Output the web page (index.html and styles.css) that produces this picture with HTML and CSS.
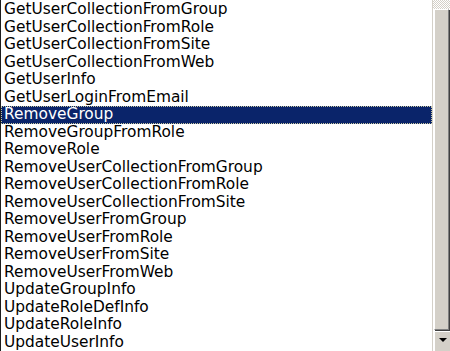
FILE: index.html
```html
<!DOCTYPE html>
<html lang="en">
<head>
    <meta charset="UTF-8">
    <title>Methods</title>
    <link rel="stylesheet" href="styles.css">
</head>
<body>
    <div class="listbox">
        <ul class="items">
            <li>GetUserCollectionFromGroup</li>
            <li>GetUserCollectionFromRole</li>
            <li>GetUserCollectionFromSite</li>
            <li>GetUserCollectionFromWeb</li>
            <li>GetUserInfo</li>
            <li>GetUserLoginFromEmail</li>
            <li class="selected">RemoveGroup</li>
            <li>RemoveGroupFromRole</li>
            <li>RemoveRole</li>
            <li>RemoveUserCollectionFromGroup</li>
            <li>RemoveUserCollectionFromRole</li>
            <li>RemoveUserCollectionFromSite</li>
            <li>RemoveUserFromGroup</li>
            <li>RemoveUserFromRole</li>
            <li>RemoveUserFromSite</li>
            <li>RemoveUserFromWeb</li>
            <li>UpdateGroupInfo</li>
            <li>UpdateRoleDefInfo</li>
            <li>UpdateRoleInfo</li>
            <li>UpdateUserInfo</li>
        </ul>
        <div class="scrollbar">
            <div class="track"></div>
            <div class="thumb"></div>
            <div class="btn-down"><span class="arrow"></span></div>
        </div>
    </div>
</body>
</html>
```

FILE: styles.css
```css
body {
    margin: 0;
    background-color: #fff;
}

.listbox {
    display: flex;
    width: 450px;
    height: 351px;
    overflow: hidden;
    border-left: 1px solid #1c1c1c;
    box-sizing: border-box;
    background-color: #fff;
}

.items {
    flex: 1;
    list-style: none;
    margin: 0;
    padding: 1px 0 0 0;
    font-family: "DejaVu Sans", Verdana, sans-serif;
    font-size: 15.4px;
    color: #000;
}

.items li {
    height: 17.5px;
    line-height: 17.5px;
    padding-left: 3px;
    white-space: nowrap;
    box-sizing: border-box;
}

.items li.selected {
    background-color: #0a246a;
    color: #fff;
    outline: 1px dotted #c8c8a0;
    outline-offset: -1px;
}

.scrollbar {
    width: 17px;
    display: flex;
    flex-direction: column;
    border-left: 1px solid #d4d0c8;
    background-color: #fff;
}

.track {
    height: 9px;
    background-image: repeating-conic-gradient(#d4d0c8 0 25%, #fff 0 50%);
    background-size: 2px 2px;
}

.thumb {
    flex: 1;
    background-color: #d4d0c8;
    border-top: 1px solid #fff;
    border-left: 1px solid #fff;
    border-right: 1px solid #808080;
    border-bottom: 1px solid #808080;
    box-shadow: 1px 1px 0 #404040;
    margin: 0 1px 1px 1px;
}

.btn-down {
    height: 20px;
    background-color: #d4d0c8;
    border-top: 1px solid #fff;
    border-left: 1px solid #fff;
    margin-left: 1px;
    display: flex;
    justify-content: center;
    padding-top: 6px;
    box-sizing: border-box;
}

.arrow {
    width: 0;
    height: 0;
    border-left: 4px solid transparent;
    border-right: 4px solid transparent;
    border-top: 4px solid #000;
}
```
